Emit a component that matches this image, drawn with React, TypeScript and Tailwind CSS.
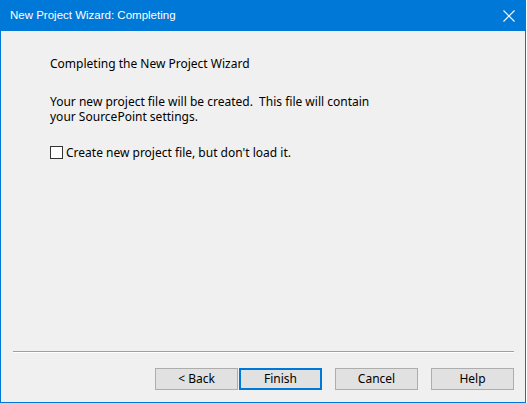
const buttons = ["< Back", "Finish", "Cancel", "Help"];

const WizardButton = ({ label, primary }: { label: string; primary?: boolean }) => (
  <button
    className={
      "w-[83px] h-[22px] bg-[#e1e1e1] text-[12px] text-black flex items-center justify-center " +
      (primary ? "border-2 border-[#0078d7]" : "border border-[#adadad]")
    }
  >
    {label}
  </button>
);

export default function App() {
  return (
    <div
      className="w-[527px] h-[403px] bg-white flex"
      style={{ fontFamily: '"Noto Sans", "Liberation Sans", sans-serif' }}
    >
      <div className="w-[526px] h-[403px] border border-t-0 border-[#0078d7] flex flex-col bg-[#f0f0f0]">
        {/* Title bar */}
        <div className="h-[31px] -mx-px bg-[#0078d7] flex items-center justify-between pl-[10px] pr-[11px] text-white">
          <span className="text-[11.5px] leading-none font-['Liberation_Sans',sans-serif]">
            New Project Wizard: Completing
          </span>
          <svg width="12" height="12" viewBox="0 0 12 12" className="stroke-white">
            <path d="M0.5 0.5 L11.5 11.5 M11.5 0.5 L0.5 11.5" strokeWidth="1.1" fill="none" />
          </svg>
        </div>

        {/* Body */}
        <div className="flex-1 flex flex-col pl-[49px] pt-[25px] text-[12px] leading-[15px] text-black">
          <p>Completing the New Project Wizard</p>
          <p className="mt-[23px]">
            Your new project file will be created.&nbsp; This file will contain
            <br />
            your SourcePoint settings.
          </p>
          <label className="mt-[21px] flex items-center gap-[3px]">
            <span className="w-[13px] h-[13px] border border-[#333] bg-white" />
            <span>Create new project file, but don't load it.</span>
          </label>
        </div>

        {/* Footer */}
        <div className="pl-[12px] pr-[11px] pb-[12px]">
          <div className="border-t border-[#a0a0a0] border-b border-b-white" />
          <div className="mt-[15px] flex justify-end">
            <div className="flex gap-[1px]">
              <WizardButton label={buttons[0]} />
              <WizardButton label={buttons[1]} primary />
            </div>
            <div className="ml-[13px] flex gap-[13px]">
              <WizardButton label={buttons[2]} />
              <WizardButton label={buttons[3]} />
            </div>
          </div>
        </div>
      </div>
    </div>
  );
}
